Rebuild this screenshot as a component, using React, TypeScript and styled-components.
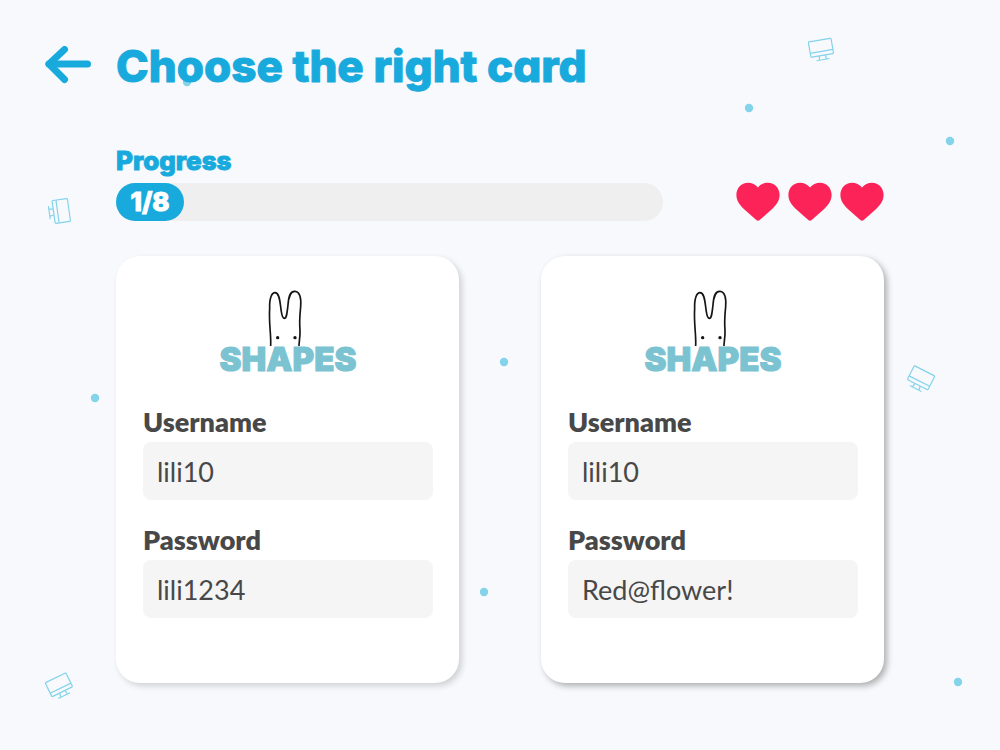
import React from "react";
import styled, { createGlobalStyle } from "styled-components";

const GlobalStyle = createGlobalStyle`
  *, *::before, *::after { box-sizing: border-box; }
  body {
    margin: 0;
    background: #f7f9fc;
    color: #484848;
    font-family: Lato, "Liberation Sans", sans-serif;
  }
`;

const display = `"Fredoka One", Inter, "Liberation Sans", sans-serif`;
const blue = "#18aadc";

const Page = styled.div`
  position: relative;
  min-height: 100vh;
  overflow: hidden;
`;

const Backdrop = styled.svg`
  position: absolute;
  inset: 0;
  width: 100%;
  height: 100%;
`;

const Content = styled.div`
  position: relative;
  padding: 36px 116px 64px 45px;
`;

const Header = styled.header`
  display: flex;
  align-items: center;
  gap: 25px;
  height: 60px;
`;

const BackButton = styled.button`
  display: flex;
  padding: 0;
  border: 0;
  background: none;
  color: ${blue};
  cursor: pointer;
`;

const Title = styled.h1`
  margin: 0;
  color: ${blue};
  font: 800 44px/60px ${display};
  font-feature-settings: "cv11" 1;
  -webkit-text-stroke: 1px ${blue};
`;

const Main = styled.main`
  padding-left: 71px;
`;

const StatusRow = styled.section`
  display: flex;
  align-items: flex-end;
  gap: 73px;
  margin: 48px 0 35px;
`;

const Progress = styled.div`
  flex: 1;
`;

const ProgressLabel = styled.h2`
  margin: 0 0 5px;
  color: ${blue};
  font: 800 26px/34px ${display};
  -webkit-text-stroke: 1px ${blue};
`;

const Track = styled.div`
  height: 38px;
  border-radius: 19px;
  background: #efefef;
`;

const Fill = styled.div`
  width: 68px;
  height: 100%;
  border-radius: 19px;
  background: ${blue};
  color: #fff;
  text-align: center;
  font: 800 26px/38px ${display};
  -webkit-text-stroke: 1px #fff;
`;

const Lives = styled.div`
  display: flex;
  gap: 8px;
  color: #fb2358;
`;

const Cards = styled.div`
  display: grid;
  grid-template-columns: 1fr 1fr;
  gap: 82px;
`;

const Card = styled.article<{ $raised?: boolean }>`
  display: flex;
  flex-direction: column;
  gap: 23px;
  padding: 33px 26px 65px 27px;
  border-radius: 24px;
  background: #fff;
  box-shadow: 3px 3px 6px rgba(0, 0, 0, ${(p) => (p.$raised ? 0.3 : 0.16)});
`;

const LogoBox = styled.div`
  display: flex;
  justify-content: center;
`;

const LogoText = styled.text`
  fill: #7cc3d2;
  stroke: #7cc3d2;
  stroke-width: 1px;
  font: 900 33px Inter, sans-serif;
`;

const Field = styled.div`
  display: flex;
  flex-direction: column;
  gap: 3px;
`;

const Label = styled.label`
  font-size: 27px;
  font-weight: 800;
  line-height: 34px;
`;

const Input = styled.input`
  width: 100%;
  height: 58px;
  padding: 0 14px;
  border: 0;
  border-radius: 8px;
  background: #f5f5f5;
  color: inherit;
  font: 400 27px/34px Lato, "Liberation Sans", sans-serif;
`;

const dots = [
  [187, 82],
  [749, 108],
  [950, 141],
  [504, 362],
  [95, 398],
  [484, 592],
  [958, 682],
];

const monitors = [
  { x: 821, y: 48, angle: -10 },
  { x: 61, y: 211, angle: 172 - 90 },
  { x: 921, y: 378, angle: 27 },
  { x: 59, y: 685, angle: -26 },
];

function Monitor({ x, y, angle }: { x: number; y: number; angle: number }) {
  return (
    <g transform={`translate(${x} ${y}) rotate(${angle})`} fill="none" stroke="#83d3ea" strokeWidth="1.2">
      <rect x="-11.5" y="-8" width="23" height="15.5" rx="1" />
      <path d="M-11.5 3.5h23M-3 7.5l-.6 4M3 7.5l.6 4M-6.5 11.8h13" />
    </g>
  );
}

function Heart() {
  return (
    <svg width="44" height="40" viewBox="0 0 44 40" aria-hidden="true">
      <path
        fill="currentColor"
        d="M22 6.500C19.500 3.300 16 1.700 12 1.700 5.400 1.700.4 7 .4 14c0 5.800 3.300 10.200 8.300 14.800l11.600 10.200c1.200 1.100 2.200 1.100 3.400 0l11.600-10.200c5-4.600 8.300-9 8.300-14.800C43.600 7 38.600 1.700 32 1.700c-4 0-7.500 1.600-10 4.800z"
      />
    </svg>
  );
}

function Logo() {
  return (
    <LogoBox>
      <svg width="144" height="93" viewBox="0 0 144 93" role="img" aria-label="Shapes">
        <g transform="translate(-16 -9) scale(.3333)">
          <path
            d="M212 198C214 165 206 130 209 85C208 55 215 38 225 38C240 38 240 70 244 95C246 108 249 115 253 115C260 115 261 100 264 75C266 50 270 33 285 34C300 35 304 55 302 80C299 110 298 130 300 150C301 170 297 185 297 198"
            fill="none"
            stroke="#151515"
            strokeWidth="5"
          />
          <circle cx="233" cy="173" r="5" fill="#151515" />
          <circle cx="285" cy="173" r="5" fill="#151515" />
        </g>
        <LogoText x="72" y="82" textAnchor="middle">
          SHAPES
        </LogoText>
      </svg>
    </LogoBox>
  );
}

function LoginCard({ id, username, password, raised }: { id: string; username: string; password: string; raised?: boolean }) {
  return (
    <Card $raised={raised}>
      <Logo />
      <Field>
        <Label htmlFor={`${id}-username`}>Username</Label>
        <Input id={`${id}-username`} readOnly value={username} />
      </Field>
      <Field>
        <Label htmlFor={`${id}-password`}>Password</Label>
        <Input id={`${id}-password`} readOnly value={password} />
      </Field>
    </Card>
  );
}

export default function App() {
  return (
    <Page>
      <GlobalStyle />
      <Backdrop viewBox="0 0 1000 750" preserveAspectRatio="xMidYMid slice" aria-hidden="true">
        {dots.map(([x, y]) => (
          <circle key={`${x}-${y}`} cx={x} cy={y} r="4.2" fill="#83d3ea" />
        ))}
        {monitors.map((m) => (
          <Monitor key={m.x} {...m} />
        ))}
      </Backdrop>
      <Content>
        <Header>
          <BackButton aria-label="Back">
            <svg width="46" height="40" viewBox="0 0 46 40" fill="none" stroke="currentColor" strokeWidth="7" strokeLinecap="round" strokeLinejoin="round">
              <path d="M42.500 18H4" />
              <path d="M19.500 3.500L4 18L19.500 33.500" />
            </svg>
          </BackButton>
          <Title>Choose the right card</Title>
        </Header>
        <Main>
          <StatusRow>
            <Progress>
              <ProgressLabel>Progress</ProgressLabel>
              <Track>
                <Fill>1/8</Fill>
              </Track>
            </Progress>
            <Lives role="img" aria-label="3 lives left">
              <Heart />
              <Heart />
              <Heart />
            </Lives>
          </StatusRow>
          <Cards>
            <LoginCard id="first" username="lili10" password="lili1234" />
            <LoginCard id="second" username="lili10" password="Red@flower!" raised />
          </Cards>
        </Main>
      </Content>
    </Page>
  );
}
